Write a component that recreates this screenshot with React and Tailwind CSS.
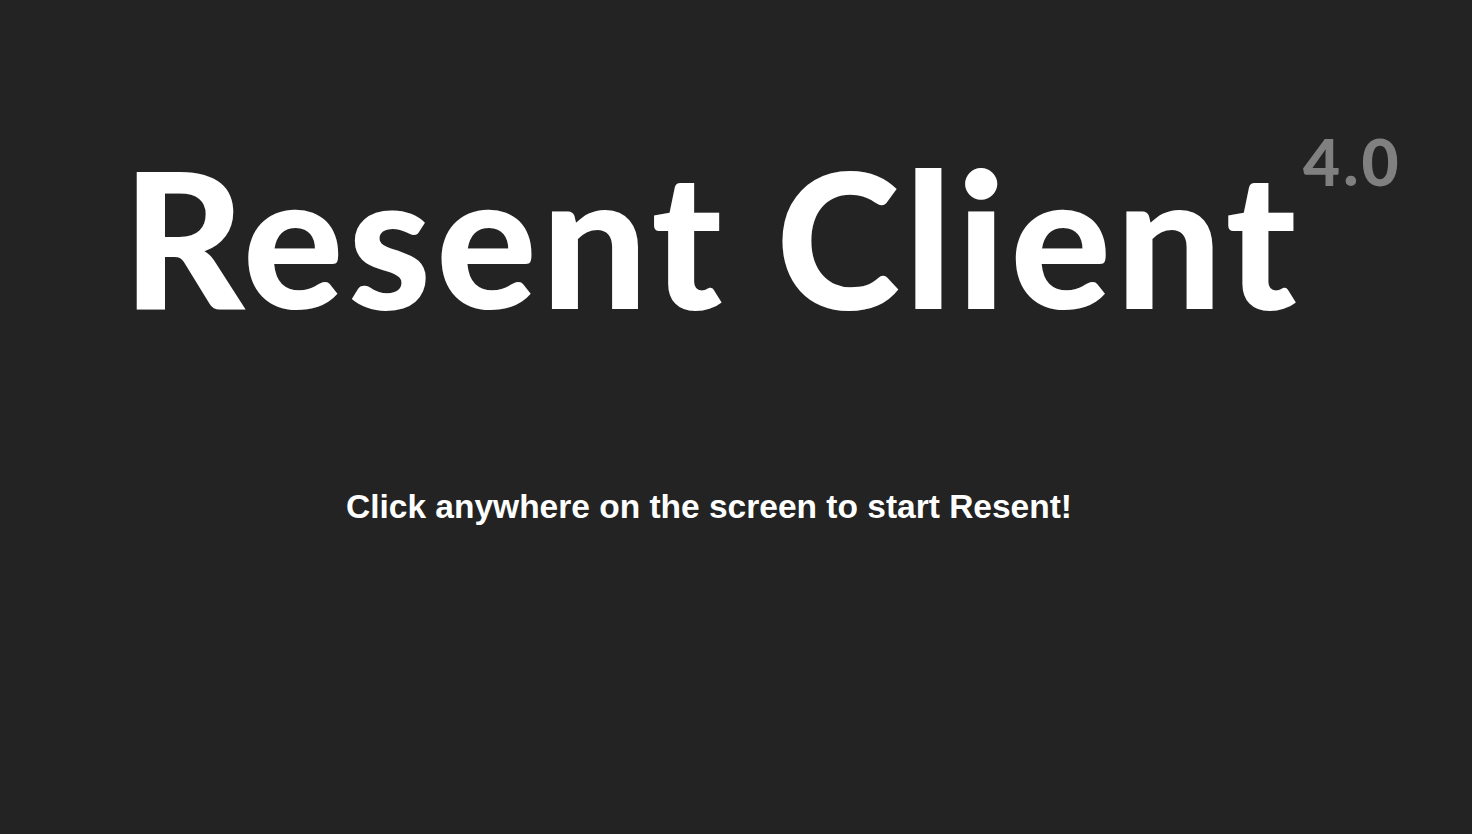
export default function App() {
  return (
    <div className="w-[1472px] h-[834px] bg-[#232323] flex flex-col items-center overflow-hidden font-['Lato',sans-serif]">
      <div className="mt-[116px] flex items-start pl-[52px]">
        <h1 className="text-white font-black text-[188px] leading-[240px] tracking-[4.6px]">
          Resent Client
        </h1>
        <span className="ml-[2px] mt-[6px] text-[#808080] font-black text-[64px] leading-[80px] tracking-[3px]">
          4.0
        </span>
      </div>
      <p className="mt-[131px] pr-[54px] text-white font-bold text-[33.5px] leading-[40px] font-['Liberation_Sans',Arial,sans-serif]">
        Click anywhere on the screen to start Resent!
      </p>
    </div>
  );
}
